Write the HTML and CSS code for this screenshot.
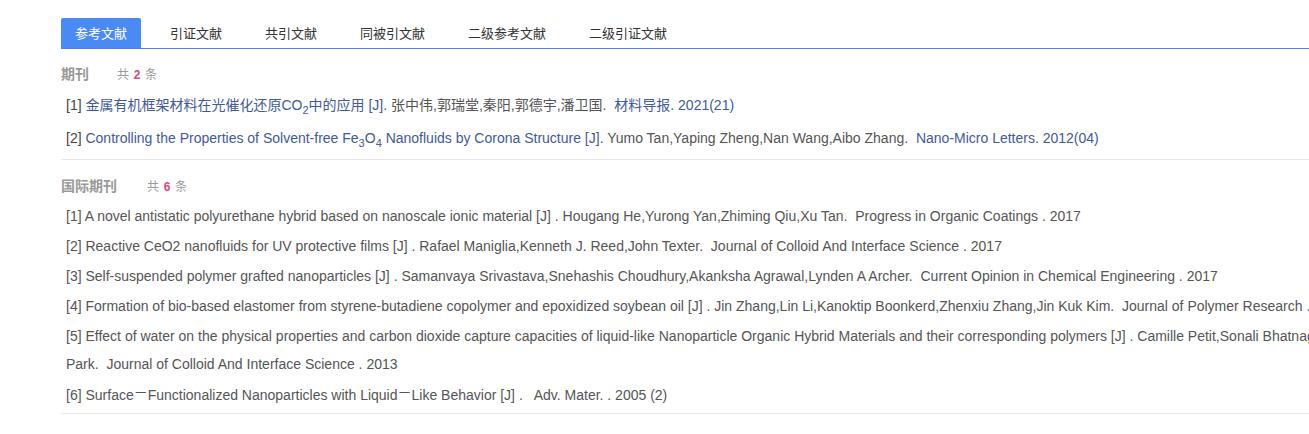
FILE: index.html
```html
<!DOCTYPE html>
<html lang="zh">
<head>
<meta charset="utf-8">
<title>参考文献</title>
<link rel="stylesheet" href="styles.css">
</head>
<body>
<div class="page">
  <ul class="tabs">
    <li class="tab active">参考文献</li>
    <li class="tab">引证文献</li>
    <li class="tab">共引文献</li>
    <li class="tab">同被引文献</li>
    <li class="tab">二级参考文献</li>
    <li class="tab">二级引证文献</li>
  </ul>

  <div class="section first">
    <div class="heading"><span class="htitle">期刊</span><span class="count">共 <b>2</b> 条</span></div>
    <ul class="list cn">
      <li><span class="idx">[1]</span> <a class="lnk">金属有机框架材料在光催化还原CO<sub>2</sub>中的应用 [J]</a>. 张中伟,郭瑞堂,秦阳,郭德宇,潘卫国.&nbsp; <a class="lnk">材料导报. 2021(21)</a></li>
      <li><span class="idx">[2]</span> <a class="lnk">Controlling the Properties of Solvent-free Fe<sub>3</sub>O<sub>4</sub> Nanofluids by Corona Structure [J]</a>. Yumo Tan,Yaping Zheng,Nan Wang,Aibo Zhang.&nbsp; <a class="lnk">Nano-Micro Letters. 2012(04)</a></li>
    </ul>
  </div>

  <div class="section">
    <div class="heading"><span class="htitle">国际期刊</span><span class="count">共 <b>6</b> 条</span></div>
    <ul class="list en">
      <li>[1] A novel antistatic polyurethane hybrid based on nanoscale ionic material [J] . Hougang He,Yurong Yan,Zhiming Qiu,Xu Tan.&nbsp; Progress in Organic Coatings . 2017</li>
      <li>[2] Reactive CeO2 nanofluids for UV protective films [J] . Rafael Maniglia,Kenneth J. Reed,John Texter.&nbsp; Journal of Colloid And Interface Science . 2017</li>
      <li>[3] Self-suspended polymer grafted nanoparticles [J] . Samanvaya Srivastava,Snehashis Choudhury,Akanksha Agrawal,Lynden A Archer.&nbsp; Current Opinion in Chemical Engineering . 2017</li>
      <li>[4] Formation of bio-based elastomer from styrene-butadiene copolymer and epoxidized soybean oil [J] . Jin Zhang,Lin Li,Kanoktip Boonkerd,Zhenxiu Zhang,Jin Kuk Kim.&nbsp; Journal of Polymer Research . 2016</li>
      <li>[5] Effect of water on the physical properties and carbon dioxide capture capacities of liquid-like Nanoparticle Organic Hybrid Materials and their corresponding polymers [J] . Camille Petit,Sonali Bhatnagar,Ah-Hyung Alissa Park.&nbsp; Journal of Colloid And Interface Science . 2013</li>
      <li>[6] Surface<span class="dash">－</span>Functionalized Nanoparticles with Liquid<span class="dash">－</span>Like Behavior [J] .&nbsp;&nbsp; Adv. Mater. . 2005 (2)</li>
    </ul>
  </div>
</div>
</body>
</html>
```

FILE: styles.css
```css
html, body {
  margin: 0;
  padding: 0;
  overflow: hidden;
  background: #fff;
}

body {
  font-family: "Liberation Sans", Arial, "Noto Sans CJK SC", sans-serif;
  color: #555;
}

.page {
  width: 1410px;
  padding: 18px 0 0 61px;
}

.tabs {
  list-style: none;
  margin: 0;
  padding: 0;
  display: flex;
  border-bottom: 1px solid #4286f5;
}

.tab {
  height: 30px;
  line-height: 30px;
  padding: 0 14px;
  margin-right: 15px;
  font-family: "Noto Sans CJK SC", sans-serif;
  font-size: 13px;
  color: #333;
  border-radius: 2px 2px 0 0;
}

.tab.active {
  background: #4a8af4;
  color: #fff;
}

.section {
  border-bottom: 1px solid #e8e8e8;
}

.section.first {
  margin-top: 12px;
  padding-bottom: 4px;
}

.section + .section {
  margin-top: 13px;
  padding-bottom: 2px;
}

.heading {
  height: 24px;
  line-height: 24px;
  display: flex;
  align-items: baseline;
}

.htitle {
  font-family: "Noto Sans CJK SC", sans-serif;
  font-size: 14px;
  font-weight: bold;
  color: #999;
  width: 56px;
}

.section + .section .htitle {
  width: 86px;
}

.count {
  font-family: "Noto Sans CJK SC", sans-serif;
  font-size: 12px;
  color: #999;
}

.count b {
  font-family: "Liberation Sans", Arial, sans-serif;
  color: #e0457b;
  margin: 0 2px;
}

.list {
  list-style: none;
  margin: 0;
  padding: 0 0 0 5px;
}

.list.cn {
  margin-top: 4px;
}

.list.cn li {
  font-size: 14px;
  line-height: 33px;
  color: #555;
  white-space: nowrap;
}

.idx {
  color: #444;
}

.lnk {
  color: #43599a;
  text-decoration: none;
}

sub {
  font-size: 11px;
  line-height: 0;
  vertical-align: -4px;
}

.list.en {
  margin-top: 5px;
}

.list.en li {
  font-size: 14px;
  line-height: 28px;
  margin-bottom: 2px;
  color: #555;
}

.dash {
  font-family: "Noto Sans CJK SC", sans-serif;
  position: relative;
  top: -3px;
}
```
